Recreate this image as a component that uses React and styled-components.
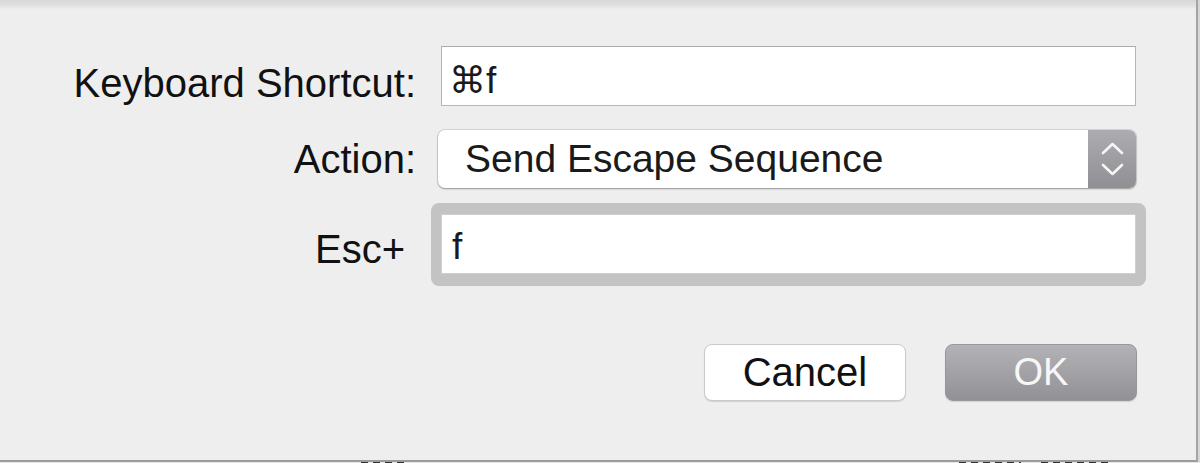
import styled, { createGlobalStyle } from "styled-components";

const GlobalStyle = createGlobalStyle`
  html, body {
    margin: 0;
    padding: 0;
    overflow: hidden;
  }
  body {
    background: #ececec;
    font-family: "Liberation Sans", "DejaVu Sans", Arial, sans-serif;
  }
`;

const Chevrons = () => (
  <svg width="48" height="58" viewBox="0 0 48 58">
    <polyline
      points="15,23 24.5,14 34,23"
      fill="none"
      stroke="#f6f6f6"
      strokeWidth="2.6"
      strokeLinecap="round"
      strokeLinejoin="round"
    />
    <polyline
      points="15,35 24.5,44 34,35"
      fill="none"
      stroke="#f6f6f6"
      strokeWidth="2.6"
      strokeLinecap="round"
      strokeLinejoin="round"
    />
  </svg>
);

const App = () => {
  return (
    <Window>
      <GlobalStyle />
      <Sheet>
        <Row $gap={0}>
          <Label $drop={13}>Keyboard Shortcut:</Label>
          <TextField>⌘f</TextField>
        </Row>
        <Row $gap={24}>
          <Label $drop={0}>Action:</Label>
          <Popup>
            <PopupText>Send Escape Sequence</PopupText>
            <Stepper>
              <Chevrons />
            </Stepper>
          </Popup>
        </Row>
        <Row $gap={15}>
          <Label $drop={9} $inset={11}>
            Esc+
          </Label>
          <FocusRing>
            <RingField>f</RingField>
          </FocusRing>
        </Row>
        <Footer>
          <Button $width={202}>Cancel</Button>
          <Button $width={192} $primary>
            OK
          </Button>
        </Footer>
      </Sheet>
      <UnderRow>
        <UnderMark $width={48} />
        <UnderMark $width={62} $skip={550} />
        <UnderMark $width={70} $skip={20} />
      </UnderRow>
    </Window>
  );
};

const Window = styled.div`
  width: 1200px;
  height: 463px;
  display: flex;
  flex-direction: column;
  background: linear-gradient(90deg, #ececec 0, #ececec 1197px, #d6d6d6 1197px);
`;

const Sheet = styled.div`
  box-sizing: border-box;
  flex: none;
  width: 1198px;
  height: 462px;
  padding: 46px 50px 0 0;
  display: flex;
  flex-direction: column;
  background: linear-gradient(#d8d8d8 0, #e2e2e2 6px, #eaeaea 8px, #eeeeee 10px, #eeeeee 100%);
  border-right: 2px solid #a4a4a4;
  border-bottom: 2px solid #9c9c9c;
`;

const Row = styled.div`
  display: grid;
  grid-template-columns: 416px 715px;
  column-gap: 15px;
  align-items: center;
  margin-top: ${(p) => p.$gap}px;
`;

const Label = styled.div`
  font-size: 40px;
  line-height: 46px;
  color: #111;
  text-align: right;
  padding-top: ${(p) => p.$drop}px;
  padding-right: ${(p) => p.$inset || 0}px;
`;

const TextField = styled.div`
  box-sizing: border-box;
  height: 60px;
  margin: 0 10px;
  padding: 8px 7px 0;
  display: flex;
  align-items: center;
  background: #fff;
  border: 1px solid #b7b7b7;
  border-top-color: #aaaaaa;
  font-size: 37px;
  color: #1a1a1a;
`;

const Popup = styled.div`
  height: 58px;
  margin: 0 10px 0 7px;
  display: flex;
  border-radius: 7px;
  overflow: hidden;
  background: #fff;
  box-shadow: 0 0 0 1px rgba(0, 0, 0, 0.1), 0 1px 2px rgba(0, 0, 0, 0.3);
`;

const PopupText = styled.div`
  flex: 1;
  display: flex;
  align-items: center;
  padding-left: 27px;
  font-size: 39px;
  color: #1a1a1a;
`;

const Stepper = styled.div`
  width: 48px;
  display: flex;
  background: linear-gradient(#adadb1, #8f8f94);
`;

const FocusRing = styled.div`
  box-sizing: border-box;
  height: 83px;
  padding: 11px 10px 12px;
  border-radius: 8px;
  background: #c3c3c3;
`;

const RingField = styled(TextField)`
  margin: 0;
  padding: 6px 10px 0;
  border-color: #cfcfcf;
`;

const Footer = styled.div`
  display: flex;
  justify-content: flex-end;
  gap: 39px;
  margin: 58px 9px 0 0;
`;

const Button = styled.div`
  box-sizing: border-box;
  width: ${(p) => p.$width}px;
  height: 57px;
  display: flex;
  align-items: center;
  justify-content: center;
  border-radius: 8px;
  font-size: ${(p) => (p.$primary ? 38 : 40)}px;
  color: ${(p) => (p.$primary ? "#f7f7f7" : "#111")};
  background: ${(p) =>
    p.$primary ? "linear-gradient(#b3b3b7, #929296)" : "#ffffff"};
  border: 1px solid ${(p) => (p.$primary ? "#98989c" : "#cacaca")};
  box-shadow: 0 1px 1px rgba(0, 0, 0, 0.12);
`;

const UnderRow = styled.div`
  height: 1px;
  display: flex;
  padding-left: 361px;
  background: #e6e6e6;
`;

const UnderMark = styled.div`
  width: ${(p) => p.$width}px;
  margin-left: ${(p) => p.$skip || 0}px;
  background: repeating-linear-gradient(90deg, #333 0 7px, transparent 7px 12px);
`;

export default App;
